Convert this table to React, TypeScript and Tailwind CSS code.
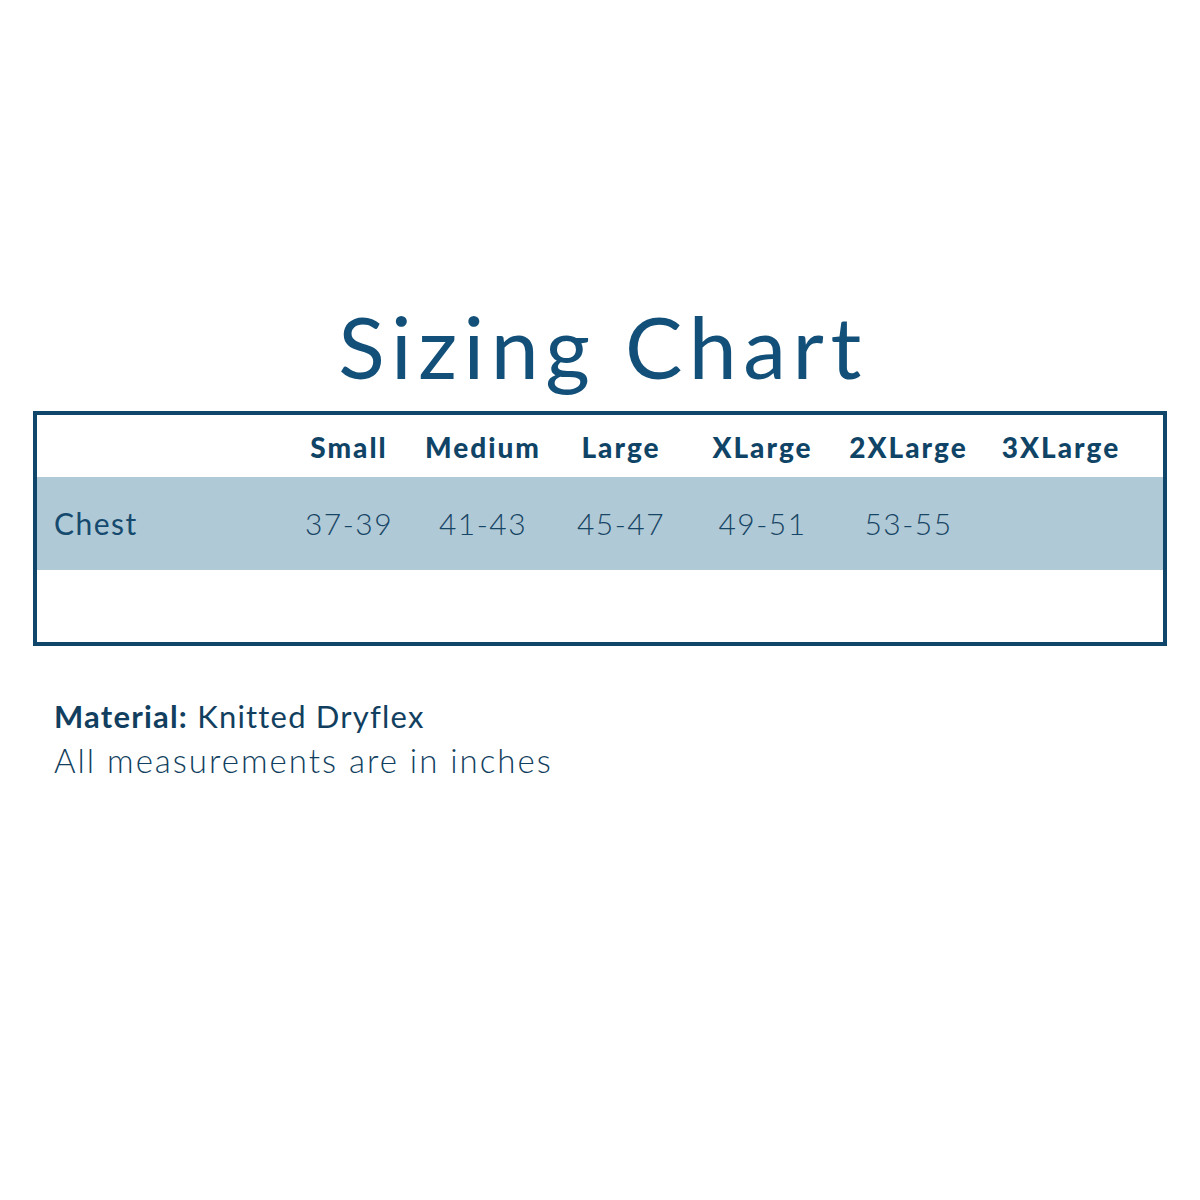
const sizes = ["Small", "Medium", "Large", "XLarge", "2XLarge", "3XLarge"]
const chest = ["37-39", "41-43", "45-47", "49-51", "53-55", ""]

const cols = "grid-cols-[246px_132px_136px_140px_143px_149px_156px]"

export default function App() {
  return (
    <div className="h-[1200px] w-[1200px] bg-white font-['Lato',sans-serif] text-[#11466b]">
      <div className="flex flex-col pt-[296px]">
        <h1 className="pl-[6px] text-center text-[86px] font-normal leading-[100px] tracking-[6.5px] text-[#125079]">
          {"Sizing Chart"}
        </h1>

        <div className="mx-[33px] mt-[15px] h-[235px] border-4 border-[#10466a]">
          <div className={`grid ${cols} h-[62px] items-center pt-[2px]`}>
            <div />
            {sizes.map((s) => (
              <div key={s} className="text-center text-[28px] font-black tracking-[2px] text-[#0f4466]">
                {s}
              </div>
            ))}
          </div>
          <div className={`grid ${cols} h-[93px] items-center bg-[#b0c9d6]`}>
            <div className="pl-[17px] text-[30px] font-normal tracking-[1.5px] text-[#154a6e]">{"Chest"}</div>
            {chest.map((c, i) => (
              <div key={i} className="text-center text-[30px] font-light tracking-[1.5px] text-[#174565]">
                {c}
              </div>
            ))}
          </div>
          <div className="h-[72px]" />
        </div>

        <div className="mt-[50px] pl-[54px] text-[#123f60]">
          <p className="text-[31px] leading-[40px] tracking-[1.2px]">
            <span className="font-bold">{"Material:"}</span>
            {" Knitted Dryflex"}
          </p>
          <p className="mt-[4px] text-[33px] font-light leading-[40px] tracking-[2px]">
            {"All measurements are in inches"}
          </p>
        </div>
      </div>
    </div>
  )
}
